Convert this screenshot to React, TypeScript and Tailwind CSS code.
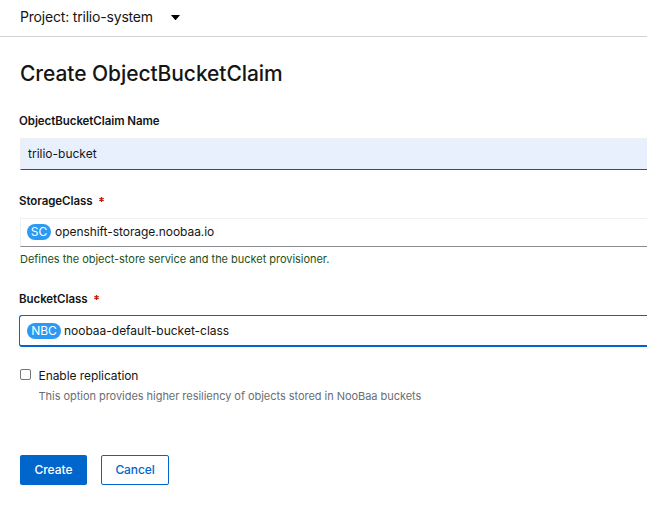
import type { ReactNode } from "react";

function FieldLabel({ children, required }: { children: ReactNode; required?: boolean }) {
  return (
    <div className="-ml-px flex h-[18px] items-center text-[11.5px] leading-[18px] font-semibold tracking-[-0.06px]">
      <span>{children}</span>
      {required && (
        <svg className="mb-[3px] ml-[6px] h-[5px] w-[5px]" viewBox="0 0 5 5" stroke="#c9190b" strokeWidth="1.3" aria-hidden="true">
          <path d="M2.5 0v5M.3 1.2l4.4 2.6M4.7 1.2L.3 3.8" />
        </svg>
      )}
    </div>
  );
}

export default function App() {
  return (
    <div className="h-[521px] w-full overflow-hidden bg-white font-[Inter,sans-serif] text-[12px] text-[#151515]">
      <header className="flex h-[37px] items-center border-b border-[#d2d2d2] pb-[3px] pl-5">
        <span className="text-[14px] tracking-[-0.19px]">Project: trilio-system</span>
        <svg className="mt-[2px] ml-[18px] h-[5px] w-[9px]" viewBox="0 0 9 5" aria-hidden="true">
          <path d="M.5 0h8q.6 0 .2.5L5 4.7q-.5.5-1 0L.3.5Q-.1 0 .5 0z" fill="#000" />
        </svg>
      </header>

      <main className="pl-5">
        <h1 className="mt-[22px] h-[30px] text-[21px] leading-[30px] font-medium tracking-[-0.07px]">Create ObjectBucketClaim</h1>

        <div className="mt-[23px]">
          <FieldLabel>ObjectBucketClaim Name</FieldLabel>
          <div className="mt-2 flex h-8 items-center border-t border-l border-b border-t-[#f0f0f0] border-l-[#f0f0f0] border-b-[#c9190b] bg-[#e8f0fe] pl-[7px]">trilio-bucket</div>
        </div>

        <div className="mt-[22px]">
          <FieldLabel required>StorageClass</FieldLabel>
          <div className="mt-2 flex h-[29px] items-center border-t border-l border-b border-t-[#f0f0f0] border-l-[#f0f0f0] border-b-[#8a8d90] pb-px pl-1.5">
            <span className="flex h-4 w-6 items-center justify-center rounded-full bg-[#2b9af3] text-white">SC</span>
            <span className="ml-1 tracking-[-0.05px]">openshift-storage.noobaa.io</span>
          </div>
          <p className="mt-1 h-4 text-[11px] leading-4 tracking-[-0.03px] text-[#1e4f18]">Defines the object-store service and the bucket provisioner.</p>
        </div>

        <div className="mt-[23px]">
          <FieldLabel required>BucketClass</FieldLabel>
          <div className="mt-[7px] -ml-px flex h-8 items-center rounded-l-[3px] border-t border-b-2 border-l border-[#06c] pl-1.5">
            <span className="ml-px flex h-4 w-[34px] items-center justify-center rounded-full bg-[#2b9af3] text-white">NBC</span>
            <span className="ml-[3px] tracking-[-0.02px]">noobaa-default-bucket-class</span>
          </div>
        </div>

        <div className="mt-[19px] flex">
          <input type="checkbox" aria-label="Enable replication" className="mt-[3px] h-[11px] w-[11px] appearance-none rounded-[2px] border border-[#767676] bg-white" />
          <div className="ml-[7.5px]">
            <div className="h-5 leading-5 tracking-[-0.06px]">Enable replication</div>
            <p className="mt-[2px] h-4 text-[11px] leading-4 tracking-[-0.04px] text-[#6a6e73]">This option provides higher resiliency of objects stored in NooBaa buckets</p>
          </div>
        </div>

        <div className="mt-[51px] flex gap-3.5">
          <button className="h-[30px] w-[67px] rounded-[2px] bg-[#06c] font-medium text-white">Create</button>
          <button className="h-[30px] w-[68px] rounded-[2px] border border-[#06c] bg-white font-medium tracking-[-0.1px] text-[#06c]">Cancel</button>
        </div>
      </main>
    </div>
  );
}
